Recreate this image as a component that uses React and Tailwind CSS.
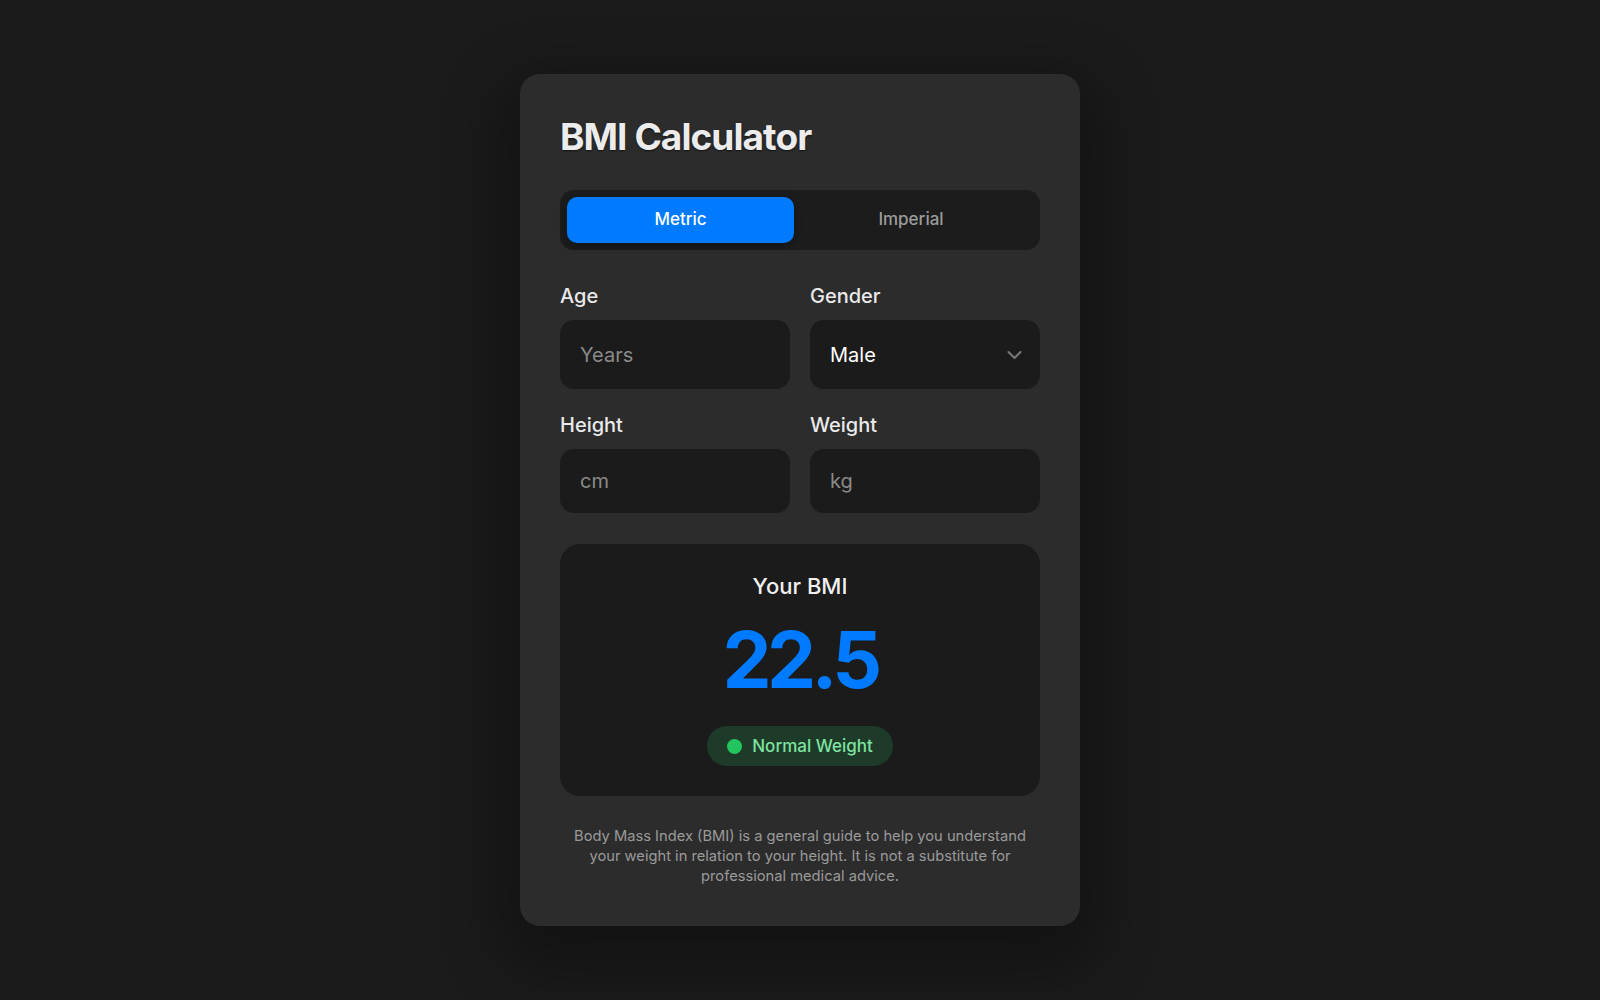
import React, { useState } from 'react';

export default function App() {
  const [unit, setUnit] = useState('metric');
  const [gender, setGender] = useState('male');

  return (
    <div className="min-h-screen w-full bg-[#1b1b1b] flex items-center justify-center font-['Inter','Noto_Sans',sans-serif]">
      <div className="w-[560px] rounded-[20px] bg-[#2c2c2c] px-10 pt-10 pb-10 shadow-[0_24px_60px_22px_rgba(0,0,0,0.3)]">
        <h1 className="text-[37px] leading-[46px] font-bold tracking-tight text-[#ececec] [text-shadow:0_1px_2px_rgba(0,0,0,0.6)]">
          BMI Calculator
        </h1>

        <div className="mt-[30px] flex h-[60px] rounded-[14px] bg-[#1c1c1c] p-[7px]">
          <button
            onClick={() => setUnit('metric')}
            className={unit === 'metric'
              ? 'w-[227px] rounded-[10px] bg-[#007aff] text-[17px] font-medium text-white shadow-[0_2px_8px_rgba(0,0,0,0.35)]'
              : 'w-[227px] rounded-[10px] text-[17px] font-medium text-[#9b9b9b]'}
          >
            Metric
          </button>
          <button
            onClick={() => setUnit('imperial')}
            className={unit === 'imperial'
              ? 'flex-1 mr-[5px] rounded-[10px] bg-[#007aff] text-[17px] font-medium text-white shadow-[0_2px_8px_rgba(0,0,0,0.35)]'
              : 'flex-1 mr-[5px] rounded-[10px] text-[17px] font-medium text-[#9b9b9b]'}
          >
            Imperial
          </button>
        </div>

        <div className="mt-8 grid grid-cols-2 gap-x-5 gap-y-[22px]">
          <div>
            <label className="mb-2.5 block text-xl leading-7 font-medium text-[#eaeaea]">Age</label>
            <input
              type="number"
              placeholder="Years"
              className="h-[69px] w-full rounded-[14px] bg-[#1b1b1b] px-5 text-xl text-white placeholder:text-[#8a8a8a] outline-none"
            />
          </div>
          <div>
            <label className="mb-2.5 block text-xl leading-7 font-medium text-[#eaeaea]">Gender</label>
            <div className="relative">
              <select
                value={gender}
                onChange={(e) => setGender(e.target.value)}
                className="h-[69px] w-full appearance-none rounded-[14px] bg-[#1b1b1b] px-5 text-xl text-white outline-none"
              >
                <option value="male">Male</option>
                <option value="female">Female</option>
              </select>
              <svg className="pointer-events-none absolute right-[18px] top-1/2 -translate-y-1/2" width="15" height="9" viewBox="0 0 15 9" fill="none">
                <path d="M1.5 1.5L7.5 7.5L13.5 1.5" stroke="#7a7a7a" strokeWidth="2" strokeLinecap="round" strokeLinejoin="round" />
              </svg>
            </div>
          </div>
          <div>
            <label className="mb-2.5 block text-xl leading-7 font-medium text-[#eaeaea]">Height</label>
            <input
              type="number"
              placeholder={unit === 'metric' ? 'cm' : 'in'}
              className="h-16 w-full rounded-[14px] bg-[#1b1b1b] px-5 text-xl text-white placeholder:text-[#8a8a8a] outline-none"
            />
          </div>
          <div>
            <label className="mb-2.5 block text-xl leading-7 font-medium text-[#eaeaea]">Weight</label>
            <input
              type="number"
              placeholder={unit === 'metric' ? 'kg' : 'lb'}
              className="h-16 w-full rounded-[14px] bg-[#1b1b1b] px-5 text-xl text-white placeholder:text-[#8a8a8a] outline-none"
            />
          </div>
        </div>

        <div className="mt-[31px] flex flex-col items-center rounded-[20px] bg-[#1b1b1b] pt-7 pb-[30px]">
          <p className="text-[22px] leading-7 font-medium text-[#f0f0f0]">Your BMI</p>
          <p className="mt-5 text-[78px] leading-[80px] font-bold tracking-[-0.06em] text-[#007aff]">22.5</p>
          <div className="mt-[26px] flex items-center gap-2.5 rounded-full bg-[#1d3b28] px-5 py-2">
            <span className="h-[15px] w-[15px] rounded-full bg-[#22c55e]" />
            <span className="text-[17px] leading-6 font-medium text-[#7ee2a0]">Normal Weight</span>
          </div>
        </div>

        <p className="mt-[30px] text-center text-[14.7px] leading-5 text-[#9a9a9a]">
          Body Mass Index (BMI) is a general guide to help you understand your weight in relation to your height. It is not a substitute for professional medical advice.
        </p>
      </div>
    </div>
  );
}
